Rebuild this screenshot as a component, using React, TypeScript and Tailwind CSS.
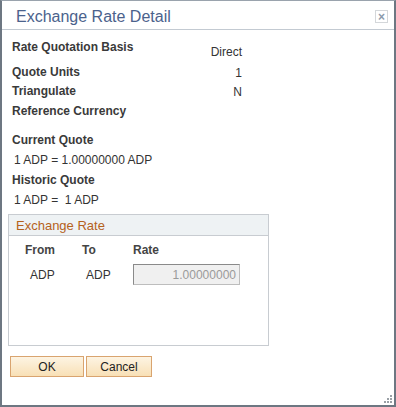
import React from "react";

export default function App() {
  const font = { fontFamily: '"Liberation Sans", Arial, sans-serif' };
  return (
    <div
      style={font}
      className="w-[396px] h-[407px] bg-white border-l-2 border-r-2 border-b-2 border-t border-l-[#6d7782] border-r-[#6d7782] border-b-[#6d7782] border-t-[#9aa3ad] flex flex-col relative"
    >
      {/* header */}
      <div className="h-[29px] flex items-center justify-between border-b border-[#c3cad2] pl-[14px] pr-[6px] shrink-0">
        <span className="text-[16px] leading-none text-[#4b628c] pt-[4px]">Exchange Rate Detail</span>
        <span className="w-[13px] h-[13px] border border-[#d4d7da] flex items-center justify-center text-[12px] leading-none font-bold text-[#8c9aab] mt-[3px]">
          ×
        </span>
      </div>

      {/* body */}
      <div className="flex flex-col pl-[10px] text-[12px] leading-[14px] text-[#333]">
        <div className="h-[25px] mt-[10px] flex w-[230px]">
          <span className="font-bold text-[#3a3a3a] flex-1">Rate Quotation Basis</span>
          <span className="mt-[5px]">Direct</span>
        </div>
        <div className="h-[19px] flex w-[230px]">
          <span className="font-bold text-[#3a3a3a] flex-1">Quote Units</span>
          <span className="mt-[1px]">1</span>
        </div>
        <div className="h-[20px] flex w-[230px]">
          <span className="font-bold text-[#3a3a3a] flex-1">Triangulate</span>
          <span className="mt-[1px]">N</span>
        </div>
        <div className="h-[29px] flex w-[230px]">
          <span className="font-bold text-[#3a3a3a] flex-1">Reference Currency</span>
        </div>
        <div className="h-[20px] font-bold text-[#3a3a3a]">Current Quote</div>
        <div className="h-[20px] pl-[2px]">1 ADP = 1.00000000 ADP</div>
        <div className="h-[20px] font-bold text-[#3a3a3a]">Historic Quote</div>
        <div className="h-[21px] pl-[2px] whitespace-pre">1 ADP =  1 ADP</div>
      </div>

      {/* group box */}
      <div className="ml-[6px] w-[261px] h-[132px] border border-[#c8ccd1] flex flex-col">
        <div className="h-[21px] bg-[#eef2f4] border-b border-[#c8ccd1] flex items-center pl-[7px] text-[13px] text-[#b5611c] leading-none">
          Exchange Rate
        </div>
        <div className="flex text-[12px] leading-[14px] font-bold text-[#444] mt-[7px]">
          <span className="w-[57px] pl-[16px] box-content">From</span>
          <span className="w-[51px]">To</span>
          <span>Rate</span>
        </div>
        <div className="flex items-center text-[12px] leading-[14px] text-[#333] mt-[7px]">
          <span className="w-[56px] pl-[21px] box-content">ADP</span>
          <span className="w-[47px]">ADP</span>
          <div className="w-[107px] h-[21px] bg-[#f0f0f0] border border-[#bdbdbd] border-t-[#8a8a8a] border-l-[#8a8a8a] flex items-center justify-end pr-[3px] text-[#9a9a9a]">
            1.00000000
          </div>
        </div>
      </div>

      {/* buttons */}
      <div className="flex gap-[2px] ml-[8px] mt-[10px] text-[12px] text-[#222]">
        <button className="w-[74px] h-[21px] border border-[#d9a46f] bg-gradient-to-b from-[#fdf4e3] to-[#f8e0b6] flex items-center justify-center leading-none">
          OK
        </button>
        <button className="w-[66px] h-[21px] border border-[#d9a46f] bg-gradient-to-b from-[#fdf4e3] to-[#f8e0b6] flex items-center justify-center leading-none">
          Cancel
        </button>
      </div>

      {/* resize grip */}
      <svg className="absolute right-[1px] bottom-[1px]" width="10" height="10" viewBox="0 0 10 10">
        <rect x="7" y="1" width="2" height="2" fill="#9aa0a6" />
        <rect x="4" y="4" width="2" height="2" fill="#9aa0a6" />
        <rect x="7" y="4" width="2" height="2" fill="#9aa0a6" />
        <rect x="1" y="7" width="2" height="2" fill="#9aa0a6" />
        <rect x="4" y="7" width="2" height="2" fill="#9aa0a6" />
        <rect x="7" y="7" width="2" height="2" fill="#9aa0a6" />
      </svg>
    </div>
  );
}
